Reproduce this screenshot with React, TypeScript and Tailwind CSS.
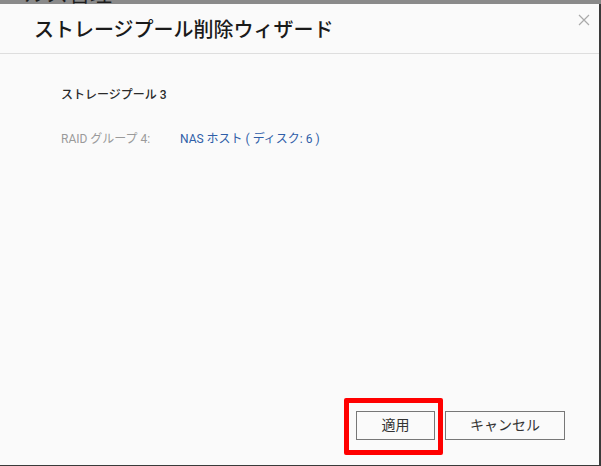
export default function App() {
  return (
    <div
      className="relative w-[601px] h-[466px] overflow-hidden bg-[#3a3a3a] flex flex-col"
      style={{ fontFamily: "Roboto, 'Noto Sans CJK JP', sans-serif" }}
    >
      {/* background page peeking above the dialog */}
      <div className="h-[4px] overflow-hidden bg-[#8a8a8a] pl-[2px]">
        <div className="-mt-[17px] text-[22px] leading-[22px] text-[#1e1e1e]">ールス管理</div>
      </div>

      {/* DIALOG */}
      <div className="flex-1 mr-[2px] mb-[1px] bg-[#fafafa] flex flex-col">
        {/* HEADER */}
        <div className="relative h-[50px] border-b border-[#dedede] flex items-center pl-[34px]">
          <h1 className="text-[20px] text-[#1a1a1a] font-medium leading-none mt-[2px]">
            ストレージプール削除ウィザード
          </h1>
          <button className="absolute right-[6px] top-[7px] w-[18px] h-[18px] flex items-center justify-center text-[#aaa]">
            <svg width="12" height="12" viewBox="0 0 12 12" stroke="currentColor" strokeWidth="1.2">
              <path d="M1 1 L11 11 M11 1 L1 11" />
            </svg>
          </button>
        </div>

        {/* CONTENT */}
        <div className="flex-1 pl-[61px] pt-[31px] text-[12px]">
          <div className="leading-[20px] font-medium text-[#2a2a2a]">ストレージプール 3</div>
          <div className="mt-[24px] flex leading-[20px]">
            <span className="w-[119px] text-[#9a9a9a]">RAID グループ 4:</span>
            <span className="text-[#2f5ea8]">NAS ホスト ( ディスク: 6 )</span>
          </div>
        </div>

        {/* FOOTER */}
        <div className="flex justify-end gap-[10px] pr-[34px] pb-[25px]">
          <button className="w-[79px] h-[29px] border border-[#777] bg-[#fafafa] text-[14px] text-[#333]">
            適用
          </button>
          <button className="w-[120px] h-[29px] border border-[#777] bg-[#fafafa] text-[14px] text-[#333]">
            キャンセル
          </button>
        </div>
      </div>

      {/* red highlight annotation */}
      <div className="absolute left-[344px] top-[398px] w-[99px] h-[57px] border-[5px] border-[#ff0000] rounded-[2px]" />
    </div>
  );
}
